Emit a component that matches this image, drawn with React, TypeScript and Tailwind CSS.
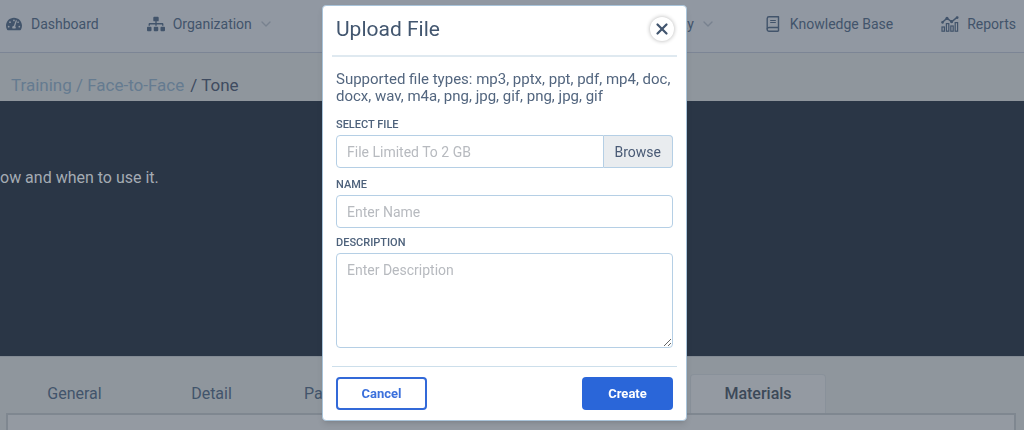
import { useState } from 'react';
import type { ReactNode } from 'react';
import { FaSitemap, FaTachometerAlt } from 'react-icons/fa';
import { ChevronDown, X } from 'lucide-react';

function BookIcon() {
  return (
    <svg viewBox="0 0 14 16" className="h-4 w-3.5" fill="none" stroke="currentColor">
      <path d="M12.5 15.3H3a1.8 1.8 0 0 1-1.8-1.8V2.5A1.8 1.8 0 0 1 3 .8h9.5v14.5" strokeWidth="1.4" strokeLinejoin="round" />
      <path d="M1.2 13.3A1.8 1.8 0 0 1 3 11.5h9.5" strokeWidth="1.3" />
      <path d="M4.2 4.5h5.6M4.2 6.5h5.6" strokeWidth="1.2" />
    </svg>
  );
}

function ReportsIcon() {
  return (
    <svg viewBox="0 0 18 16" className="h-4 w-[18px]" fill="none" stroke="currentColor" strokeWidth="1.2">
      <path d="M1.2 6.6 6 2.2l4.6 3.6L16 1.4" strokeWidth="1.4" />
      <circle cx="6" cy="2.4" r="1" fill="currentColor" />
      <circle cx="10.6" cy="5.6" r="1" fill="currentColor" />
      <circle cx="1.5" cy="6.4" r=".7" fill="currentColor" />
      <circle cx="16.2" cy="1.6" r=".8" fill="currentColor" />
      <rect x="1" y="11" width="2.4" height="4.2" />
      <rect x="5.4" y="7.6" width="2.4" height="7.6" />
      <rect x="9.8" y="10" width="2.4" height="5.2" />
      <rect x="14.2" y="6.6" width="2.4" height="8.6" />
    </svg>
  );
}

type NavItemProps = { icon?: ReactNode; label: string; menu?: boolean };

function NavItem({ icon, label, menu }: NavItemProps) {
  return (
    <a href="#" className="flex items-center text-sm leading-5 whitespace-nowrap">
      {icon && <span className="mr-2 flex w-[18px] justify-center">{icon}</span>}
      {label}
      {menu && <ChevronDown className="ml-1.5 size-4 text-[#78828f]" />}
    </a>
  );
}

const labelClass = 'block text-[11px] leading-3 font-medium uppercase text-[#4d617b]';
const fieldClass =
  'w-full border border-[#b5cfe5] bg-white px-2.5 text-sm text-[#46597a] placeholder:text-[#b7babf] outline-none';

function UploadDialog() {
  const [name, setName] = useState('');
  const [description, setDescription] = useState('');

  return (
    <form
      role="dialog"
      aria-labelledby="upload-title"
      className="w-full max-w-[365px] rounded border border-[#a9c4da] bg-white px-[9px] pb-2.5 shadow-md"
    >
      <div className="flex h-[51px] items-center justify-between border-b-2 border-[#dfe9f0] pr-[3px] pb-1 pl-1">
        <h1 id="upload-title" className="text-[21px] leading-7 text-[#42566f]">
          Upload File
        </h1>
        <button
          type="button"
          aria-label="Close"
          className="flex size-6 items-center justify-center rounded-full bg-white text-[#42566f] shadow-[0_0_4px_rgba(0,0,0,0.3)]"
        >
          <X className="size-[18px]" strokeWidth={3} />
        </button>
      </div>

      <div className="px-1 pt-3.5 pb-[18px]">
        <p className="text-[15px] leading-[17px] text-[#53667f]">
          Supported file types: mp3, pptx, ppt, pdf, mp4, doc, docx, wav, m4a, png, jpg, gif, png, jpg, gif
        </p>

        <label htmlFor="file" className={labelClass + ' mt-3.5'}>
          Select File
        </label>
        <div className="mt-1 flex h-[33px]">
          <input id="file" readOnly placeholder="File Limited To 2 GB" className={fieldClass + ' min-w-0 flex-1 rounded-l'} />
          <button
            type="button"
            className="rounded-r border border-l-0 border-[#b5cfe5] bg-[#e9ecef] px-[11px] text-sm text-[#495a75]"
          >
            Browse
          </button>
        </div>

        <label htmlFor="name" className={labelClass + ' mt-[11px]'}>
          Name
        </label>
        <input
          id="name"
          value={name}
          onChange={(e) => setName(e.target.value)}
          placeholder="Enter Name"
          className={fieldClass + ' mt-1 block h-[33px] rounded'}
        />

        <label htmlFor="description" className={labelClass + ' mt-[9px]'}>
          Description
        </label>
        <textarea
          id="description"
          value={description}
          onChange={(e) => setDescription(e.target.value)}
          placeholder="Enter Description"
          className={fieldClass + ' mt-1 block h-[95px] resize rounded py-1.5'}
        />
      </div>

      <div className="flex justify-between border-t border-[#cddfeb] px-1 pt-2.5">
        <button
          type="button"
          className="h-[33px] w-[91px] rounded border-2 border-[#3269d8] bg-white text-[13px] font-bold text-[#3b70dc]"
        >
          Cancel
        </button>
        <button type="submit" className="h-[33px] w-[91px] rounded bg-[#2a66d9] text-[13px] font-bold text-white">
          Create
        </button>
      </div>
    </form>
  );
}

export default function App() {
  return (
    <div className="flex min-h-screen flex-col bg-[#8f969d] font-[Roboto,sans-serif] text-[#42546b]">
      <header className="flex h-[53px] items-center justify-between border-b border-[#7c8595] bg-[#9198a2] pr-2 pl-[5px] pb-1">
        <nav className="flex items-center gap-12">
          <NavItem icon={<FaTachometerAlt className="size-4" />} label="Dashboard" />
          <NavItem icon={<FaSitemap className="size-[18px]" />} label="Organization" menu />
        </nav>
        <nav className="flex items-center gap-12">
          <NavItem label="Activity" menu />
          <NavItem icon={<BookIcon />} label="Knowledge Base" />
          <NavItem icon={<ReportsIcon />} label="Reports" />
        </nav>
      </header>

      <div className="flex h-12 items-end gap-1.5 px-[11px] pb-1 text-[17px] leading-6">
        <a href="#" className="text-[#657b90]">
          Training / Face-to-Face
        </a>
        <span className="text-[#3e4b60]">/ Tone</span>
      </div>

      <section className="h-[255px] bg-[#2a3646] pt-[67px] text-base leading-5 text-[#a4abb3]">
        <p>ow and when to use it.</p>
      </section>

      <main className="flex flex-1 flex-col border-t border-[#838b94] pr-2 pl-1.5">
        <div className="flex h-14 items-end text-center text-base leading-[38px]">
          <a href="#" className="w-[137px]">
            General
          </a>
          <a href="#" className="w-[137px]">
            Detail
          </a>
          <a href="#" className="w-[137px] pl-6 text-left">
            Parts
          </a>
          <a
            href="#"
            className="ml-[273px] w-[136px] rounded-t border border-b-0 border-[#89919a] bg-[#949aa2] font-medium text-[#3c4958]"
          >
            Materials
          </a>
        </div>
        <div className="flex-1 border-2 border-b-0 border-[#7f8790] bg-[#949aa2]" />
      </main>

      <div className="fixed inset-0 flex items-start justify-center pt-[5px] pr-[15px]">
        <UploadDialog />
      </div>
    </div>
  );
}
